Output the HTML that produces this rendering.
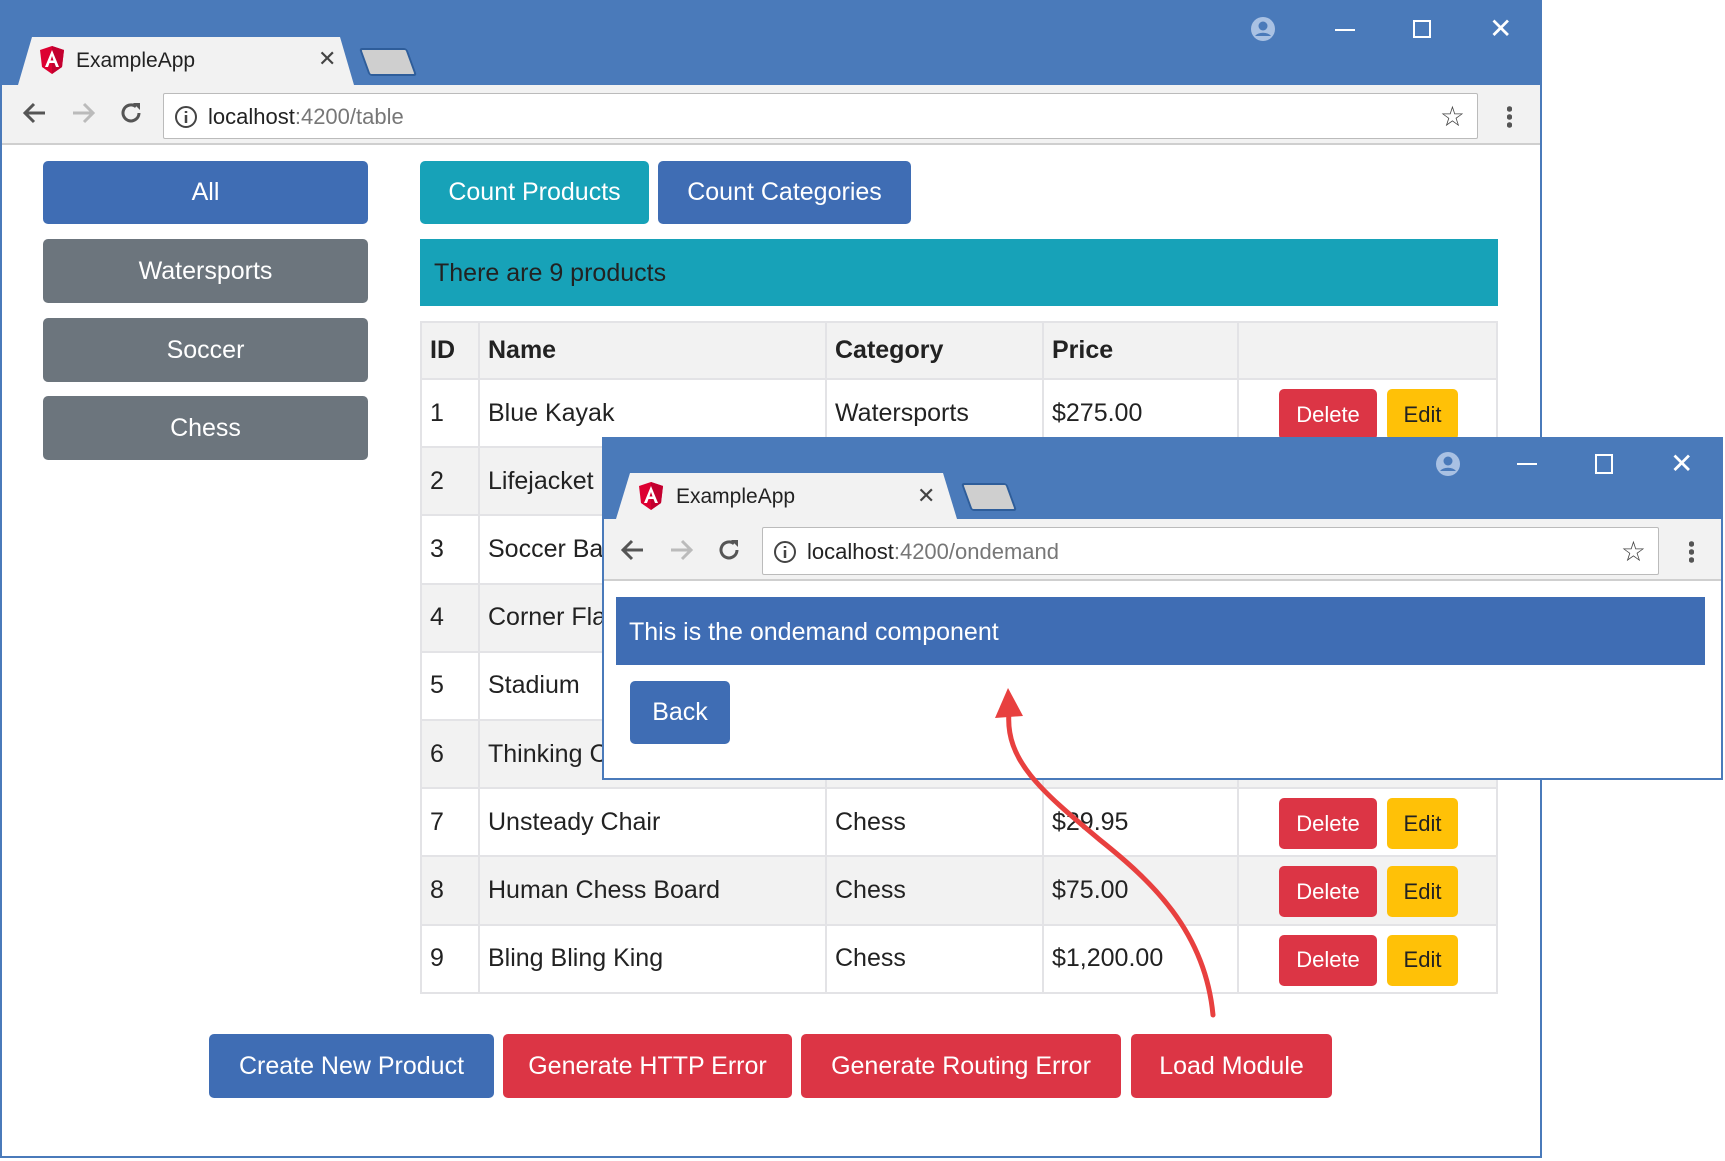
<!DOCTYPE html>
<html><head><meta charset="utf-8"><style>
*{box-sizing:border-box;margin:0;padding:0}
body{width:1725px;height:1161px;background:#fff;position:relative;overflow:hidden;font-family:"Liberation Sans",sans-serif}
.abs{position:absolute}
.win{position:absolute;background:#fff;border:2px solid #4a7aba}
.title{position:absolute;left:0;top:0;right:0;background:#4a7aba}
.tool{position:absolute;left:0;right:0;background:#f2f2f2;border-bottom:2px solid #cfcfcf}
.tab{position:absolute;background:#f2f2f2;clip-path:polygon(14px 0,calc(100% - 14px) 0,100% 100%,0 100%)}
.tab2{position:absolute;background:#cfcfcf;border:2px solid #2e5d9a;transform:skewX(20deg);border-radius:3px}
.url{position:absolute;background:#fff;border:1px solid #bbb;border-radius:2px;font-size:22px;color:#222}
.url .g{color:#777}
.btn{position:absolute;color:#fff;border-radius:5px;display:flex;align-items:center;justify-content:center;font-size:25px}
.blue{background:#3f6db4}.gray{background:#6c757d}.teal{background:#17a2b8}.red{background:#dc3545}.yel{background:#ffc107;color:#222}
table{position:absolute;left:420px;top:321px;width:1078px;border-collapse:collapse;font-size:25px;color:#222}
td,th{border:2px solid #e3e3e6;padding:0 8px;text-align:left;height:68.2px}
th{height:57px;background:#f2f2f2}
tr.s td{background:#f2f2f2}
td.a{position:relative}
td.a .btn{font-size:22px}
</style></head><body>

<!-- main window -->
<div class="win" style="left:0;top:0;width:1542px;height:1158px">
 <div class="title" style="height:83px"></div>
 <div class="tab" style="left:16px;top:35px;width:336px;height:48px"></div>
 <div class="abs" style="left:38px;top:44px;width:24px;height:28px"><svg width="24" height="28" viewBox="0 0 24 28"><path d="M12 0L0 4l2 17 10 7 10-7 2-17z" fill="#dd0031"/><path d="M12 0v28l10-7 2-17z" fill="#c3002f"/><path d="M12 4L5 21h3l1.5-4h5l1.5 4h3zM10.5 14.5L12 10l1.5 4.5z" fill="#fff"/></svg></div>
 <div class="abs" style="left:74px;top:47px;font-size:21px;color:#222">ExampleApp</div>
 <div class="abs" style="left:316px;top:44px;font-size:22px;color:#444">✕</div>
 <div class="tab2" style="left:362px;top:46px;width:48px;height:28px"></div>
 <div class="abs" style="left:1248px;top:14px"><svg width="26" height="26"><circle cx="13" cy="13" r="12" fill="#a9c1e3"/><circle cx="13" cy="10" r="4.5" fill="#4a7aba"/><path d="M5 20a9 6 0 0 1 16 0" fill="#4a7aba"/></svg></div>
 <div class="abs" style="left:1333px;top:27px;width:20px;height:2px;background:#fff"></div>
 <div class="abs" style="left:1411px;top:18px;width:18px;height:18px;border:2px solid #fff"></div>
 <div class="abs" style="left:1487px;top:10px;font-size:28px;color:#fff">✕</div>
 <div class="tool" style="top:83px;height:60px"></div>
 <div class="abs" style="left:20px;top:98px"><svg width="26" height="26"><path d="M23 13H4M12 4l-9 9 9 9" stroke="#555" stroke-width="3" fill="none"/></svg></div>
 <div class="abs" style="left:68px;top:98px"><svg width="26" height="26"><path d="M3 13h19M14 4l9 9-9 9" stroke="#bbb" stroke-width="3" fill="none"/></svg></div>
 <div class="abs" style="left:116px;top:98px"><svg width="26" height="26"><path d="M21 13a8 8 0 1 1-3-6.3" stroke="#555" stroke-width="3" fill="none"/><path d="M15 3h7v7z" fill="#555"/></svg></div>
 <div class="url" style="left:161px;top:91px;width:1315px;height:46px">
  <svg class="abs" style="left:10px;top:11px" width="24" height="24"><circle cx="12" cy="12" r="10" stroke="#444" stroke-width="2" fill="none"/><path d="M12 10v8M12 6v2" stroke="#444" stroke-width="2.5"/></svg>
  <span class="abs" style="left:44px;top:10px">localhost<span class="g">:4200/table</span></span>
  <span class="abs" style="right:12px;top:6px;font-size:28px;color:#444">☆</span>
 </div>
 <div class="abs" style="left:1505px;top:103px;width:5px;height:24px;background:radial-gradient(circle,#555 2.5px,transparent 3px) 0 0/5px 8px"></div>
</div>

<div class="btn blue" style="left:43px;top:161px;width:325px;height:63px">All</div>
<div class="btn gray" style="left:43px;top:239px;width:325px;height:64px">Watersports</div>
<div class="btn gray" style="left:43px;top:318px;width:325px;height:64px">Soccer</div>
<div class="btn gray" style="left:43px;top:396px;width:325px;height:64px">Chess</div>
<div class="btn teal" style="left:420px;top:161px;width:229px;height:63px">Count Products</div>
<div class="btn blue" style="left:658px;top:161px;width:253px;height:63px">Count Categories</div>
<div class="abs teal" style="left:420px;top:239px;width:1078px;height:67px;font-size:25px;color:#222;padding:20px 14px">There are 9 products</div>

<table>
<colgroup><col style="width:58px"><col style="width:347px"><col style="width:217px"><col style="width:195px"><col></colgroup>
<tr><th>ID</th><th>Name</th><th>Category</th><th>Price</th><th></th></tr>
<tr><td>1</td><td>Blue Kayak</td><td>Watersports</td><td>$275.00</td><td class="a"><div class="btn red" style="left:40px;top:9px;width:98px;height:51px">Delete</div><div class="btn yel" style="left:148px;top:9px;width:71px;height:51px">Edit</div></td></tr>
<tr class="s"><td>2</td><td>Lifejacket</td><td></td><td></td><td></td></tr>
<tr><td>3</td><td>Soccer Ball</td><td></td><td></td><td></td></tr>
<tr class="s"><td>4</td><td>Corner Flags</td><td></td><td></td><td></td></tr>
<tr><td>5</td><td>Stadium</td><td></td><td></td><td></td></tr>
<tr class="s"><td>6</td><td>Thinking Cap</td><td></td><td></td><td></td></tr>
<tr><td>7</td><td>Unsteady Chair</td><td>Chess</td><td>$29.95</td><td class="a"><div class="btn red" style="left:40px;top:9px;width:98px;height:51px">Delete</div><div class="btn yel" style="left:148px;top:9px;width:71px;height:51px">Edit</div></td></tr>
<tr class="s"><td>8</td><td>Human Chess Board</td><td>Chess</td><td>$75.00</td><td class="a"><div class="btn red" style="left:40px;top:9px;width:98px;height:51px">Delete</div><div class="btn yel" style="left:148px;top:9px;width:71px;height:51px">Edit</div></td></tr>
<tr><td>9</td><td>Bling Bling King</td><td>Chess</td><td>$1,200.00</td><td class="a"><div class="btn red" style="left:40px;top:9px;width:98px;height:51px">Delete</div><div class="btn yel" style="left:148px;top:9px;width:71px;height:51px">Edit</div></td></tr>
</table>

<div class="btn blue" style="left:209px;top:1034px;width:285px;height:64px">Create New Product</div>
<div class="btn red" style="left:503px;top:1034px;width:289px;height:64px">Generate HTTP Error</div>
<div class="btn red" style="left:801px;top:1034px;width:320px;height:64px">Generate Routing Error</div>
<div class="btn red" style="left:1131px;top:1034px;width:201px;height:64px">Load Module</div>

<!-- second window -->
<div class="win" style="left:602px;top:437px;width:1121px;height:343px">
 <div class="title" style="height:80px"></div>
 <div class="tab" style="left:12px;top:34px;width:341px;height:46px"></div>
 <div class="abs" style="left:35px;top:43px;width:24px;height:28px"><svg width="24" height="28" viewBox="0 0 24 28"><path d="M12 0L0 4l2 17 10 7 10-7 2-17z" fill="#dd0031"/><path d="M12 0v28l10-7 2-17z" fill="#c3002f"/><path d="M12 4L5 21h3l1.5-4h5l1.5 4h3zM10.5 14.5L12 10l1.5 4.5z" fill="#fff"/></svg></div>
 <div class="abs" style="left:72px;top:46px;font-size:21px;color:#222">ExampleApp</div>
 <div class="abs" style="left:313px;top:44px;font-size:22px;color:#444">✕</div>
 <div class="tab2" style="left:362px;top:44px;width:46px;height:28px"></div>
 <div class="abs" style="left:831px;top:12px"><svg width="26" height="26"><circle cx="13" cy="13" r="12" fill="#a9c1e3"/><circle cx="13" cy="10" r="4.5" fill="#4a7aba"/><path d="M5 20a9 6 0 0 1 16 0" fill="#4a7aba"/></svg></div>
 <div class="abs" style="left:913px;top:24px;width:20px;height:2px;background:#fff"></div>
 <div class="abs" style="left:991px;top:15px;width:18px;height:20px;border:2px solid #fff"></div>
 <div class="abs" style="left:1066px;top:8px;font-size:28px;color:#fff">✕</div>
 <div class="tool" style="top:80px;height:62px"></div>
 <div class="abs" style="left:16px;top:98px"><svg width="26" height="26"><path d="M23 13H4M12 4l-9 9 9 9" stroke="#555" stroke-width="3" fill="none"/></svg></div>
 <div class="abs" style="left:64px;top:98px"><svg width="26" height="26"><path d="M3 13h19M14 4l9 9-9 9" stroke="#bbb" stroke-width="3" fill="none"/></svg></div>
 <div class="abs" style="left:112px;top:98px"><svg width="26" height="26"><path d="M21 13a8 8 0 1 1-3-6.3" stroke="#555" stroke-width="3" fill="none"/><path d="M15 3h7v7z" fill="#555"/></svg></div>
 <div class="url" style="left:158px;top:88px;width:897px;height:48px">
  <svg class="abs" style="left:10px;top:12px" width="24" height="24"><circle cx="12" cy="12" r="10" stroke="#444" stroke-width="2" fill="none"/><path d="M12 10v8M12 6v2" stroke="#444" stroke-width="2.5"/></svg>
  <span class="abs" style="left:44px;top:11px">localhost<span class="g">:4200/ondemand</span></span>
  <span class="abs" style="right:12px;top:7px;font-size:28px;color:#444">☆</span>
 </div>
 <div class="abs" style="left:1085px;top:101px;width:5px;height:24px;background:radial-gradient(circle,#555 2.5px,transparent 3px) 0 0/5px 8px"></div>
 <div class="abs blue" style="left:12px;top:158px;width:1089px;height:68px;color:#fff;font-size:25px;padding:21px 13px">This is the ondemand component</div>
 <div class="btn blue" style="left:26px;top:242px;width:100px;height:63px">Back</div>
</div>

<svg class="abs" style="left:0;top:0" width="1725" height="1161">
 <path d="M1213 1015 C1205 930, 1150 880, 1100 840 C1040 790, 1005 760, 1009 712" stroke="#e8403f" stroke-width="5" fill="none" stroke-linecap="round"/>
 <path d="M995 718 L1008 688 L1023 716 Z" fill="#e8403f"/>
</svg>
</body></html>
